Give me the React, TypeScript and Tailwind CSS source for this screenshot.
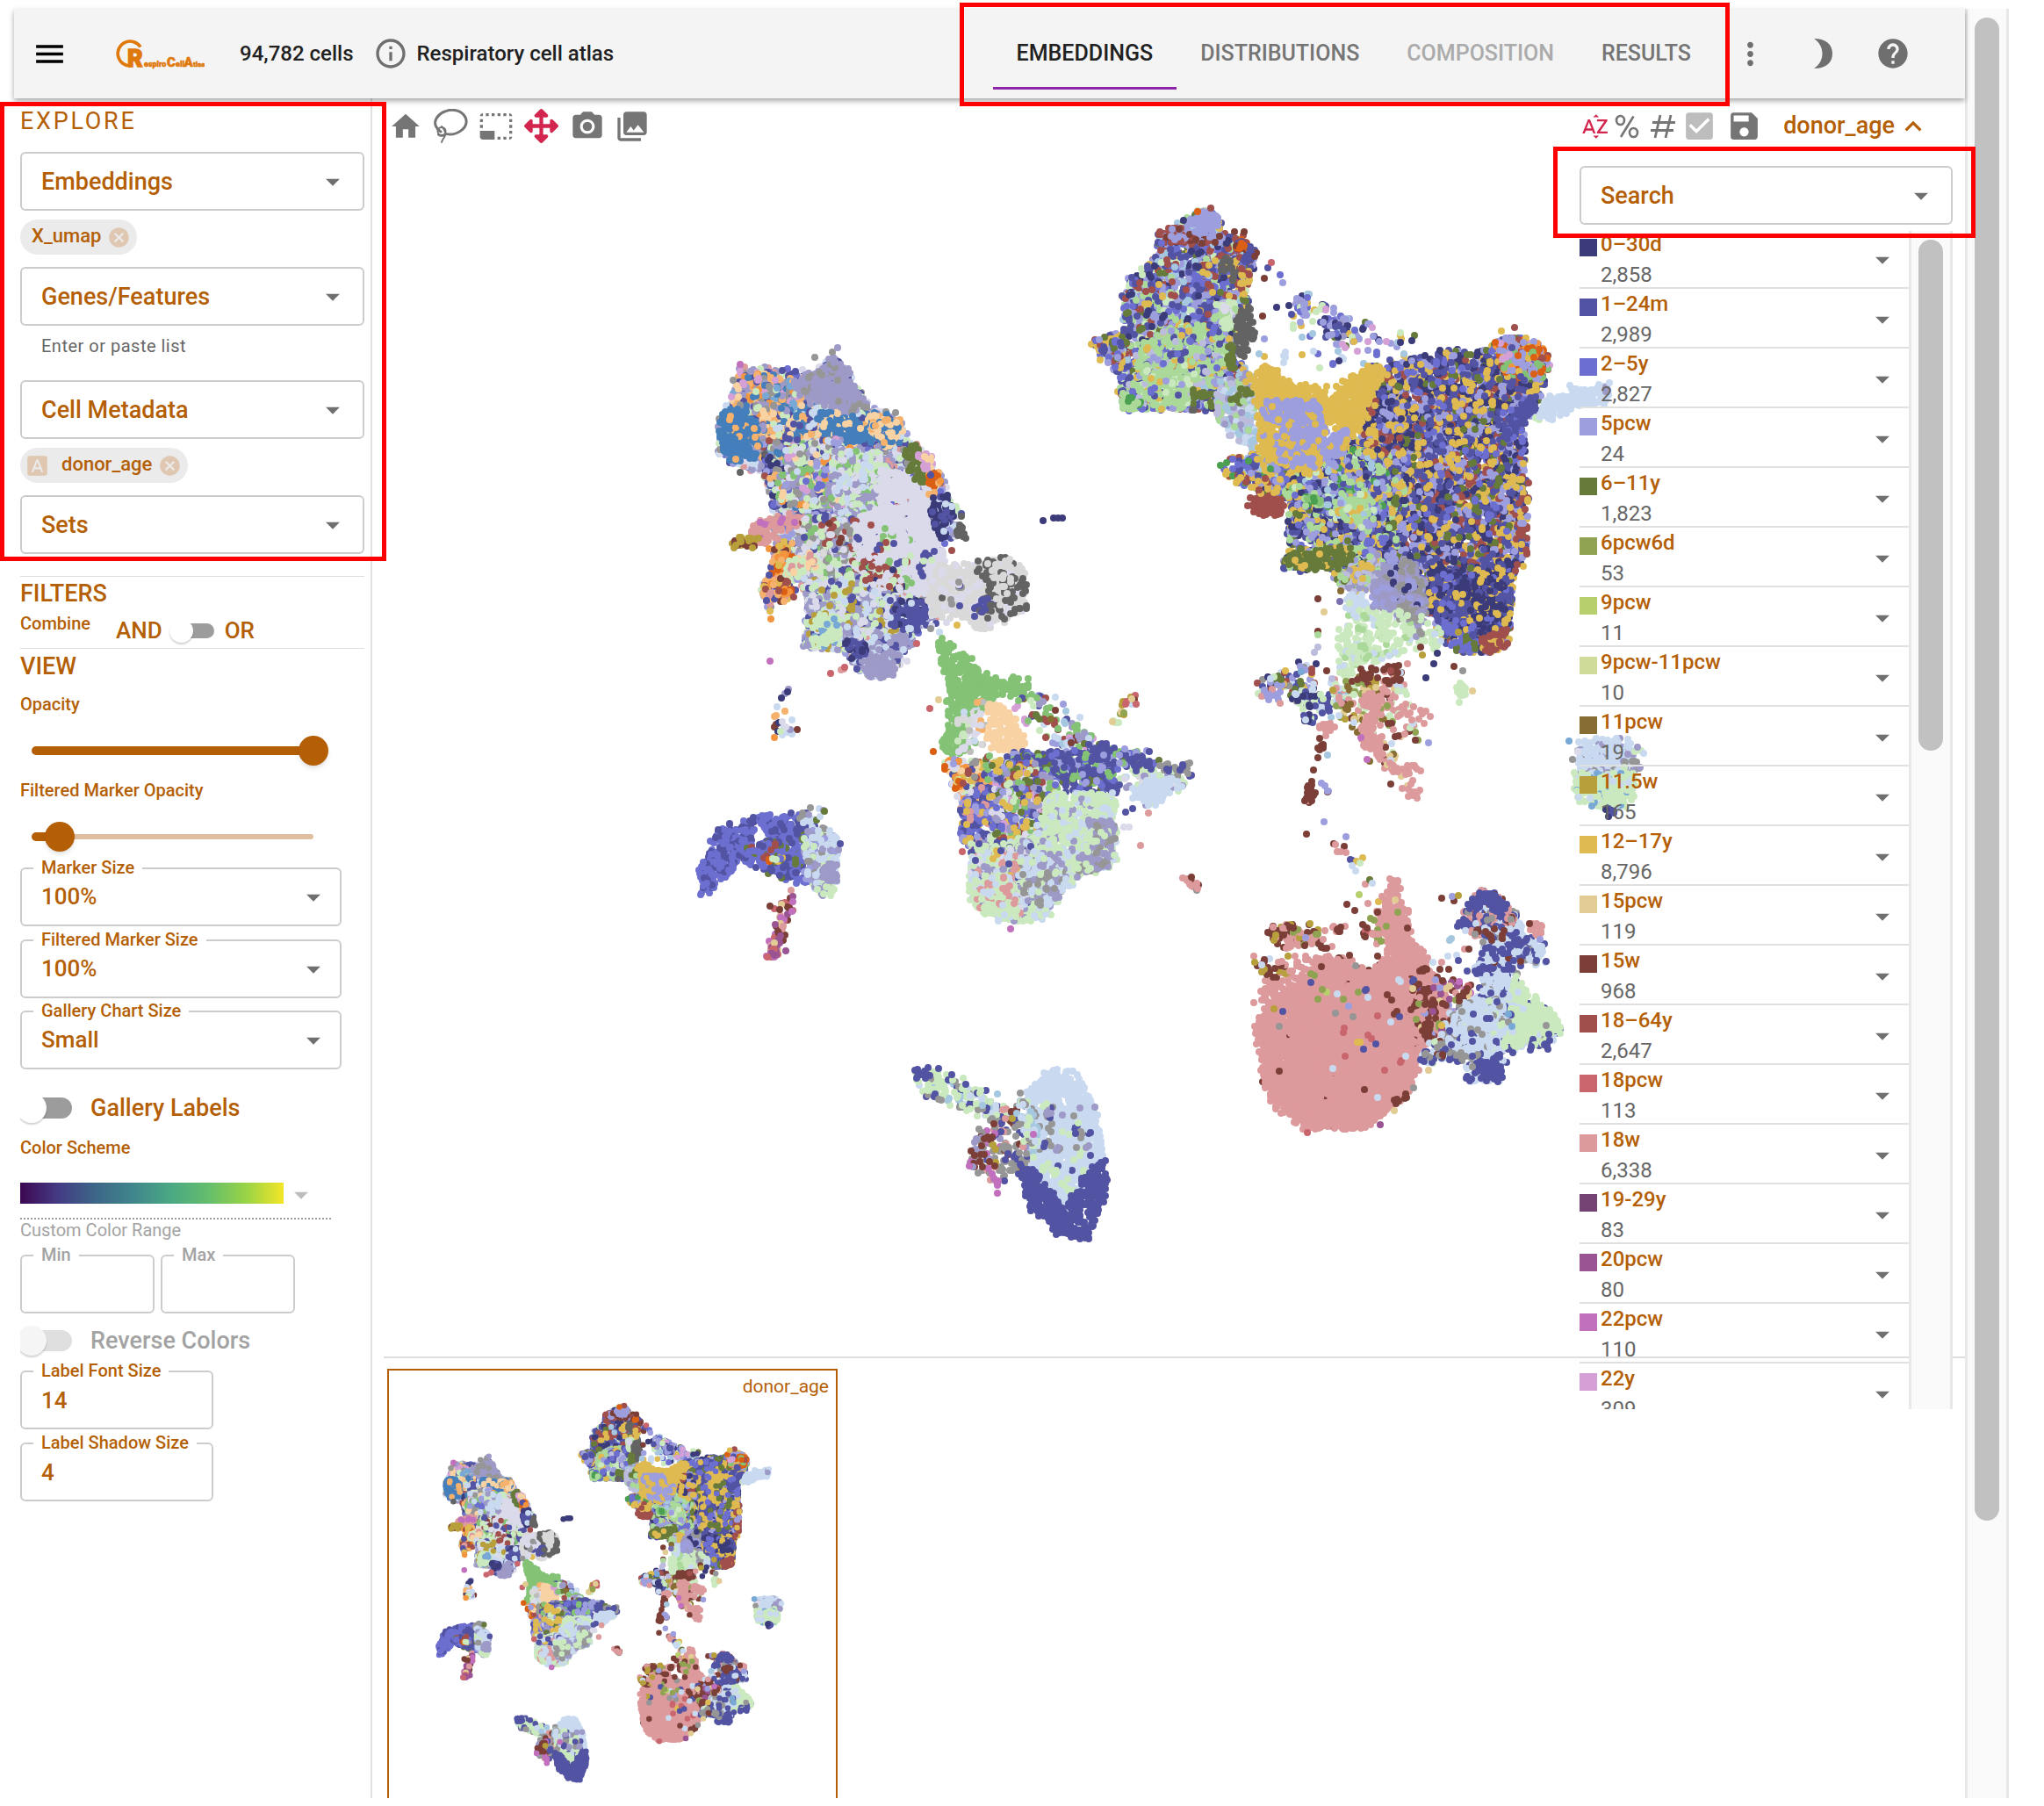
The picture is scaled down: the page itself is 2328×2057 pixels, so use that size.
import React, { useId } from "react";
import {
  MdArrowDropDown,
  MdCancel,
  MdCheckBox,
  MdExpandLess,
  MdFontDownload,
  MdHelp,
  MdHome,
  MdInfoOutline,
  MdMenu,
  MdMoreVert,
  MdPhotoCamera,
  MdPhotoLibrary,
  MdPhotoSizeSelectSmall,
  MdSave,
  MdSortByAlpha,
} from "react-icons/md";
import { FaArrowsAlt } from "react-icons/fa";

/* ---------- embedding data ---------- */

const PALETTE: Record<string, string> = {
  a: "#3B3B79", b: "#5353A3", c: "#6C6FCF", d: "#9D9EDE", e: "#667A3A", f: "#8FA353",
  g: "#B7CF6D", h: "#CFDB99", i: "#876D33", j: "#B79F3B", k: "#DEBA50", l: "#E2CC94",
  m: "#7B3F38", n: "#A04F4C", o: "#C9666D", p: "#DD9A9C", q: "#744373", r: "#9A5494",
  s: "#C170BD", t: "#D4A0D6", A: "#457FBB", B: "#78A9D6", C: "#A5C7E0", D: "#C9DAF0",
  E: "#DB6014", F: "#F3943F", G: "#F6B26D", H: "#F8D2A2", I: "#4A9F51", J: "#84C276",
  K: "#AAD99A", L: "#CBE9BF", M: "#7A70B0", N: "#9E9AC8", O: "#BCBDDC", P: "#DADAEB",
  Q: "#636363", R: "#969696", S: "#BDBDBD", T: "#D9D9D9",
};

type Frame = { ox: number; oy: number; sx: number; sy: number };
/* [colour mix, outline, area per cell] */
type Region = [string, string, number?];

const DENSE = 13;

const WEST: Frame = { ox: 780, oy: 370, sx: 2.529, sy: 2.119 };
const NORTH: Frame = { ox: 1220, oy: 210, sx: 2.613, sy: 2.24 };
const EAST: Frame = { ox: 1340, oy: 900, sx: 3, sy: 2.904 };
const SOUTH: Frame = { ox: 600, oy: 43, sx: 1.022, sy: 1.0805 };

const WEST_REGIONS: Region[] = [
  ["NNNLDPPRbdcLp", "160,110 230,105 300,110 380,115 430,70 450,95 490,140 530,200 600,215 640,270 690,300 730,360 760,410 780,450 800,500 770,515 740,500 735,560 735,700 660,745 640,790 600,840 540,850 500,830 450,780 400,775 340,785 360,730 340,640 320,620 280,640 240,690 220,640 260,580 260,520 250,400 225,360 160,335 95,310 95,270 130,190"],
  ["GGHABNNLbRtFG", "135,190 160,110 240,110 330,140 380,200 330,270 210,290 180,220"],
  ["NbRGdcLnQBAaD", "220,290 340,280 400,400 380,440 300,440 260,430 230,370"],
  ["AAAHHGNLDAb", "220,220 400,190 560,215 625,250 600,300 450,280 300,285 220,260"],
  ["AAAAAAAAAAG", "95,270 115,215 150,195 195,240 225,270 190,330 140,330 100,300"],
  ["NNNNNNNNNNNR", "310,140 380,115 430,75 450,105 490,150 525,195 480,215 400,200 360,190"],
  ["AAAAH", "380,210 470,215 540,280 500,290 400,270"],
  ["HHHGA", "520,215 590,215 630,250 600,270 550,250"],
  ["NNbLRJFJDPdcHtNL", "300,290 440,270 500,330 480,430 380,440 300,430 260,420 280,360"],
  ["LLLNDPJPN", "420,300 560,310 600,350 560,480 460,460 430,390"],
  ["PPPPNDJRnbLRTNL", "310,460 520,470 560,560 560,620 400,620 340,600 330,540"],
  ["nnmRNbLP", "370,450 410,460 430,510 480,540 460,560 400,520", 26],
  ["PPPPPPPPPPPPP", "560,350 640,355 700,400 715,470 735,540 750,610 690,660 620,630 560,600 500,540 490,490 560,420"],
  ["PJnbL", "470,480 720,500 700,640 520,620", 110],
  ["eeeee", "640,285 665,290 690,340 725,375 695,390 660,360 635,320"],
  ["ttttH", "660,305 700,305 718,335 700,350 675,330"],
  ["EFbGE", "700,360 730,350 740,395 710,415"],
  ["aaaabDa", "705,450 740,405 770,430 775,470 745,520 720,480"],
  ["QQQQ", "772,450 792,455 800,500 825,528 795,515", 20],
  ["ppppppps", "190,500 210,475 270,465 330,455 320,480 265,500 250,530 220,535"],
  ["jjmjm", "135,520 170,510 215,515 210,530 150,545"],
  ["EEFFGpnkbGm", "260,520 300,520 320,560 285,600 320,650 265,670 235,665 222,640 245,590"],
  ["LLHLp", "310,560 380,550 400,590 330,610 290,600"],
  ["LLLNNDPjDbLPN", "340,620 560,600 620,650 640,740 560,770 450,785 355,775 360,700"],
  ["nnnaPPL", "490,560 570,570 640,640 600,660 500,590", 24],
  ["NNNNDDb", "470,770 640,745 620,800 590,840 540,850 500,830"],
  ["NNNNNNN", "520,810 620,790 600,840 545,855"],
  ["LLLLLB", "375,750 380,700 450,700 450,765 360,780"],
  ["bbbbbbabD", "590,665 690,665 700,720 650,740 590,725"],
  ["bba", "460,760 530,770 530,805 480,800"],
  ["TTTTTTP", "730,580 830,580 880,565 965,565 982,620 980,680 920,710 870,740 830,730 800,700 730,700 700,650"],
  ["QQQQ", "840,570 960,560 985,620 985,690 920,710 850,700 840,640", 60],
  ["TTT", "870,570 950,565 930,680 880,650", 60],
  ["bbbbQ", "840,660 890,650 890,685 830,705", 24],
  ["QRabPP", "730,610 810,610 800,680 740,690", 90],
  ["NkRDPb", "690,725 800,710 830,715 700,750", 60],
  ["aaFNa", "280,880 300,872 300,890 278,905", 30],
  ["mDDLNaPGDD", "252,930 305,920 310,960 335,995 290,995 255,970", 45],
  ["oopLl", "450,825 500,825 500,840 455,840", 60],
  ["JJJJJJJJJ", "722,770 745,755 800,795 850,840 900,858 990,860 1005,885 940,890 880,905 830,935 800,990 775,1040 738,1025 762,970 767,890 745,830"],
  ["JJJJ", "1010,930 1060,940 1075,970 1035,955", 20],
  ["PDJGLSTPG", "785,910 860,905 865,1035 790,1045", 34],
  ["HHHHHHH", "875,920 905,912 940,940 965,985 985,1005 950,1030 900,1030 868,990"],
  ["bLJdtDeiNnCLmJ", "950,890 1060,885 1130,950 1200,1000 1190,1030 1060,1030 1020,1000 940,950", 85],
  ["NLDJRdtm", "1070,960 1140,965 1190,1000 1190,1025 1090,1020", 40],
  ["LLDNTDPL", "1250,1090 1330,1070 1465,1105 1400,1130 1360,1165 1320,1180 1270,1130", 45],
  ["bbbbbbbcJde", "950,1035 1100,1030 1200,1010 1340,1040 1380,1060 1330,1070 1240,1065 1240,1125 1160,1135 1080,1110 1000,1090 930,1070"],
  ["RRRRRb", "1340,1060 1400,1055 1465,1070 1465,1095 1400,1085"],
  ["DDDDDD", "1290,1120 1370,1095 1430,1110 1350,1150 1300,1145"],
  ["GFnbPLkcRHdEFL", "745,1045 850,1050 900,1060 900,1150 830,1180 790,1150 765,1090"],
  ["ccccbbpkd", "790,1160 870,1110 900,1180 880,1240 850,1265 790,1245"],
  ["cckbLdnPetNbkJP", "860,1040 1000,1050 1080,1110 1060,1250 880,1250 880,1120"],
  ["LLLLLLDNDL", "1060,1130 1240,1130 1245,1250 1235,1305 1150,1320 1080,1380 1030,1430 930,1440 830,1400 815,1330 850,1270 1000,1240"],
  ["NNRLNRL", "1160,1195 1240,1195 1240,1290 1180,1320 1130,1320 1160,1250"],
  ["LNpbkNDLLPL", "820,1260 1000,1240 1000,1350 950,1435 840,1395"],
  ["LLLDp", "820,1330 940,1330 960,1430 850,1400"],
  ["DDNNDRNLL", "980,1270 1100,1290 1090,1360 1040,1410 980,1390 960,1320"],
  ["fJjomLlDb", "1215,950 1250,930 1285,870 1310,885 1305,935 1285,920 1260,950 1230,970", 38],
  ["pppm", "1440,1335 1460,1335 1482,1358 1465,1362", 20],
  ["ccccbbc", "40,1325 65,1260 100,1215 200,1195 210,1225 160,1270 130,1325 80,1360 45,1375"],
  ["ccccbbbec", "190,1195 270,1178 340,1180 375,1220 360,1260 365,1345 310,1350 240,1325 180,1300 150,1270 240,1240 230,1210"],
  ["eEFnLnbkcc", "160,1260 280,1250 300,1300 200,1305", 55],
  ["eNDRbe", "330,1180 400,1155 405,1190 340,1205", 30],
  ["DDDNNNLLRdD", "340,1220 420,1210 445,1260 440,1335 420,1370 370,1365 345,1320"],
  ["LLLLN", "370,1355 430,1350 420,1380 385,1375"],
  ["NNNN", "390,1310 438,1300 438,1345 400,1340"],
  ["pprrsommols", "275,1365 315,1370 315,1400 290,1450 275,1520 250,1530 230,1515 260,1450", 22],
  ["rrso", "225,1510 275,1510 275,1525 250,1535", 16],
];

const NORTH_REGIONS: Region[] = [
  ["bbccadknneLKCddb", "345,90 400,65 435,90 450,130 545,170 545,210 520,260 525,320 500,340 480,420 515,480 480,540 460,570 350,575 155,578 145,540 175,510 130,485 120,450 60,410 130,385 160,370 160,310 155,275 175,245 230,200 270,165 260,130 300,125"],
  ["KKKKLKOKdkKbc", "200,410 300,370 420,350 480,400 460,460 440,510 350,520 340,575 220,575 155,575 145,530 200,500"],
  ["LLKOP", "440,300 490,300 490,370 440,370"],
  ["nnnmdd", "250,130 310,105 380,130 460,135 440,150 320,150"],
  ["ddddddd", "355,80 400,65 435,80 438,120 380,125 350,105"],
  ["mmbnEb", "480,120 550,165 555,190 520,205 490,160"],
  ["QQQQk", "450,180 490,200 495,250 470,250 440,210", 20],
  ["QQQQQ", "500,325 525,310 550,370 545,400 520,410 530,440 495,440 490,370"],
  ["kkkn", "500,220 540,200 525,290 500,280", 22],
  ["knbdcek", "55,408 130,385 160,400 160,485 120,465"],
  ["eeeeee", "350,530 450,525 440,540 360,545"],
  ["eeee", "465,400 485,410 485,470 465,470"],
  ["IIKJ", "160,520 200,520 210,570 170,570", 40],
  ["QQQn", "345,572 405,572 400,585 350,585"],
  ["OOCNODKC", "445,490 540,475 555,560 555,675 500,650 455,625 430,585"],
  ["eJeK", "450,560 520,520 560,520 520,560", 30],
  ["abcdktLedCa", "640,290 720,270 830,330 900,360 1030,380 1060,420 960,450 830,420 720,400 640,380", 85],
  ["bbcdNa", "740,340 820,330 840,390 760,395", 28],
  ["dcbNLk", "650,290 720,280 730,340 650,345", 38],
  ["akDLcdtC", "620,430 860,420 900,450 830,470 640,480", 150],
  ["bbbaakkddcnnebdak", "880,470 950,460 1060,440 1120,420 1180,430 1250,420 1290,390 1350,400 1420,430 1410,480 1380,580 1340,600 1355,680 1355,760 1345,850 1355,930 1315,1010 1305,1100 1295,1180 1240,1195 1170,1195 1110,1160 1080,1100 1000,1000 920,920 880,900 850,700 880,600"],
  ["kdbKbceadaKk", "540,680 900,640 1000,760 960,1000 870,1035 790,1010 760,980 700,985 630,970 650,940 645,880 660,840 640,800 560,775 530,720"],
  ["kkdnbCccIk", "435,720 500,695 600,700 640,760 560,775 470,745"],
  ["nnnnnnnn", "522,820 570,785 635,800 635,840 540,845"],
  ["kkn", "540,775 600,770 620,790 560,790", 20],
  ["KJIcLkdCabkdb", "650,770 820,690 920,650 940,740 900,880 830,870 700,820"],
  ["KKLKdkC", "780,820 880,780 900,890 840,880", 18],
  ["JJJIK", "680,800 750,775 750,800 700,820", 18],
  ["kkkkkkkkk", "505,485 590,460 630,505 730,520 780,525 830,495 880,468 935,462 900,540 890,600 840,640 750,600 740,690 710,745 650,715 560,685 555,560 545,520"],
  ["ddddddk", "570,555 750,550 750,620 840,630 810,680 720,715 630,685 640,620 590,600"],
  ["kddk", "550,620 640,640 760,640 850,660 700,740 600,690", 50],
  ["kkkdaabn", "880,560 1000,540 980,700 860,720", 30],
  ["eeeeek", "630,968 660,935 820,925 845,960 760,978 700,985"],
  ["kOKNkeNO", "790,1000 900,940 940,1000 900,1045 810,1030"],
  ["NNRRdNa", "900,1000 1000,940 1050,1000 1060,1100 1000,1090 920,1075"],
  ["aaabbbckab", "1060,960 1200,1000 1310,960 1305,1120 1200,1160 1080,1090"],
  ["aaabk", "1200,1000 1300,1010 1290,1110 1200,1100", 24],
  ["ccccbje", "1090,1110 1200,1150 1210,1195 1150,1195"],
  ["nnnnnk", "1220,1160 1300,1125 1295,1175 1230,1198"],
  ["nnkbdn", "1335,800 1362,800 1362,930 1320,1000", 24],
  ["dddntJEFkdbd", "1255,410 1350,385 1430,435 1400,500 1310,500"],
  ["EEnE", "1365,425 1425,425 1410,450 1380,445", 36],
  ["bbbbbbc", "1280,600 1385,540 1385,580 1330,620 1330,655 1280,645"],
  ["LDL", "1360,590 1400,600 1380,615", 40],
  ["DDDDDDD", "1395,565 1480,520 1600,508 1605,530 1590,555 1500,565 1450,605 1405,590"],
  ["NNRND", "1545,505 1605,510 1600,545 1540,535", 50],
  ["LLLLDLLK", "820,1060 870,1060 900,1090 1000,1080 1105,1150 1095,1180 1020,1180 980,1200 930,1225 870,1200 850,1260 795,1265 795,1150 830,1120", 26],
  ["DDDDL", "815,1045 875,1055 850,1105 815,1090"],
  ["NRLNRL", "900,1050 1060,1095 1050,1160 990,1120", 20],
  ["NNNNd", "890,1010 950,1020 960,1080 910,1080"],
  ["adndkDRbeBLn", "550,1275 640,1240 720,1210 740,1270 700,1320 550,1300", 30],
  ["ddddp", "560,1285 620,1290 655,1315 575,1305"],
  ["abbLDCaaLb", "640,1295 755,1300 780,1350 700,1385 680,1380 700,1340", 22],
  ["BCLD", "760,1290 830,1280 830,1320 780,1330", 26],
  ["ppppmLjDflim", "780,1270 980,1240 1000,1340 1050,1420 980,1420 960,1500 900,1470 860,1400 770,1340", 36],
  ["ppppp", "870,1290 920,1300 915,1400 935,1475 890,1445 865,1400", 18],
  ["mmmm", "880,1235 980,1225 970,1275 830,1260", 40],
  ["pppp", "980,1340 1045,1325 1065,1365 985,1380", 40],
  ["pppp", "720,1390 770,1370 800,1390 740,1410", 24],
  ["ppppl", "920,1480 1020,1475 1055,1530 1010,1560 980,1530", 40],
  ["mmmm", "732,1400 752,1430 758,1450 742,1450", 18],
  ["mmmp", "703,1530 722,1520 728,1570 695,1580", 15],
  ["LLLLL", "1145,1270 1175,1280 1178,1320 1158,1322"],
];

const EAST_REGIONS: Region[] = [
  ["pppppppppppppppppm", "260,775 400,760 460,600 480,560 560,555 650,600 720,560 780,545 850,545 870,600 920,650 945,720 930,800 860,820 825,900 825,930 785,1005 735,1045 675,1095 600,1122 450,1122 405,1090 335,1035 295,960 295,850 270,810"],
  ["ppppppppppppppppppp", "262,778 380,640 460,600 560,560 650,605 780,560 780,700 815,900 785,1000 735,1040 675,1090 600,1122 450,1122 405,1090 335,1035 295,960 295,850 270,810"],
  ["pppppp", "275,660 330,630 500,640 500,760 400,760 300,700 275,690", 22],
  ["pppppppp", "735,280 755,280 760,370 795,400 800,490 850,520 850,560 720,560 730,500 685,460 690,385 715,370"],
  ["mmmpDbfRlpD", "430,590 860,580 840,880 730,820 480,700", 620],
  ["mbDok", "380,720 820,740 800,960 660,960", 1400],
  ["mmmmjpp", "305,460 400,440 490,450 480,490 410,535 340,510", 22],
  ["ppmf", "310,450 500,455 520,500 400,520", 60],
  ["mmmpj", "320,575 405,590 400,620 300,620", 24],
  ["ppjDm", "255,550 330,540 340,600 280,600", 80],
  ["pp", "290,545 460,540 460,600 390,600", 60],
  ["ppm", "480,440 600,450 600,530 500,560", 160],
  ["mmmm", "545,440 590,460 570,485 548,470", 20],
  ["mmmo", "625,435 650,440 660,500 632,475", 18],
  ["ppf", "650,400 720,440 700,520 640,460", 60],
  ["mmmmplfdrmp", "780,650 860,615 1000,640 1010,720 950,740 900,830 850,825 800,700", 36],
  ["mmmm", "845,760 875,760 870,830 848,825", 16],
  ["mmmj", "690,1080 790,990 800,930 815,940 800,1000 740,1045", 46],
  ["DDDbbDRD", "960,720 1040,680 1060,610 1020,600 1040,560 1050,470 1100,400 1150,400 1190,460 1255,525 1260,570 1160,565 1160,640 1230,720 1300,745 1315,790 1280,830 1190,845 1120,870 1110,940 1080,965 1000,955 980,900 900,885 835,905 835,870 900,820 930,760", 12],
  ["LLLLLLLLD", "1155,605 1180,650 1240,712 1300,745 1315,790 1250,825 1180,850 1105,850 1095,800 1140,740 1145,680"],
  ["DDDDDDDRL", "970,725 1060,690 1140,710 1130,770 1070,865 980,840"],
  ["ppbbDDRpmb", "975,470 990,390 1030,330 1080,330 1155,400 1155,450 1100,440 1030,490"],
  ["bbbbb", "1000,360 1040,330 1080,350 1130,380 1110,400 1060,380 1000,400"],
  ["bbb", "940,440 1000,420 1000,450 960,455", 24],
  ["pppp", "1205,440 1250,445 1250,485 1205,475"],
  ["bDbDbm", "1050,450 1180,450 1190,580 1060,600", 40],
  ["bbbb", "985,610 1060,585 1100,560 1060,610", 20],
  ["bbbbL", "1195,845 1300,805 1270,845 1250,872", 24],
  ["bbbbbb", "1030,890 1095,875 1120,930 1080,970 1020,945"],
  ["bbb", "985,950 1020,945 1010,962 990,960", 14],
  ["RRRRb", "930,875 1030,860 1030,925 960,895", 22],
  ["bbbDLRm", "830,860 960,780 960,880 840,910", 50],
  ["bb", "1000,800 1150,810 1160,870 1050,860", 110],
  ["bbR", "990,680 1150,690 1150,800 990,800", 320],
  ["srmlor", "960,630 1010,640 1005,710 960,680", 26],
  ["ppmi", "525,175 550,175 590,210 562,212", 22],
  ["mmmp", "430,0 470,0 480,40 430,42", 16],
  ["pp", "785,0 830,0 800,30", 20],
];

const SOUTH_REGIONS: Region[] = [
  ["bLLLbDRLC", "450,1275 470,1267 550,1300 560,1338 530,1330 462,1300", 26],
  ["bbb", "448,1275 468,1266 470,1285 452,1288", 24],
  ["RRRRmjpRNbs", "525,1345 560,1312 590,1320 590,1380 555,1415 514,1388", 34],
  ["mmm", "515,1365 545,1350 540,1388 518,1385", 60],
  ["DDDDDDDD", "580,1300 600,1276 620,1269 640,1277 662,1315 672,1380 655,1400 640,1440 610,1440 590,1400 590,1340"],
  ["RDLCD", "570,1290 600,1330 590,1400 570,1340", 40],
  ["bRLDN", "600,1310 665,1320 665,1380 600,1400", 90],
  ["LDL", "600,1390 650,1390 630,1435", 60],
  ["bbbbbbbb", "572,1385 600,1400 625,1445 650,1400 674,1378 676,1410 656,1474 630,1480 582,1435"],
  ["DDDDDDDDNR", "1226,866 1250,862 1284,866 1290,890 1284,908 1228,908 1222,890"],
  ["PPR", "1210,874 1226,880 1226,890 1212,884", 70],
  ["NRNLN", "1275,866 1298,872 1292,912 1280,910", 70],
  ["LLLLLLLLDB", "1222,906 1288,904 1290,922 1282,940 1262,950 1238,944 1216,930"],
  ["aab", "1250,945 1268,952 1262,960", 18],
];

const WEST_CELLS =
  "a1033,473 a1062,467 a1075,466 a1088,466 F258,995 o420,842 s245,812 k245,690 F248,710 o706,925 l732,905 E715,1030 p1312,1257 o800,1272 s937,1457 R375,78 R425,65 N440,55 s160,95 b448,1253 b1270,1175 b1290,1168 p1335,1178 P1265,1213 P1280,1213 R138,133 n770,545 Q160,355 Q845,570 m245,1402 m273,1412 o668,770";
const NORTH_CELLS =
  "m733,1058 l752,1090 m735,1140 K733,1150 O725,1195 O735,1180 m575,240 b585,212 o595,200 c623,230 d630,250 a612,313 m570,335 d575,395 n1320,365 k1280,375 m1138,1230 R1165,1240 a1055,1258 a1090,1197 a1080,1223 d755,1535 d765,1548 d745,1528 m735,1463 m720,1493 C763,1457 p1070,1357 l1195,1293 m515,120 n265,120 m760,1240 O775,1262 n950,1242 k575,440 C560,432 m1040,1180 j1045,1200 p1002,1222 i802,1038 M800,1065 s880,1468 s862,1412 d1063,1425 m950,1530 n415,60 E376,70 p622,1323";
const EAST_CELLS =
  "m443,145 d503,105 d580,155 b594,228 b600,232 k635,225 k615,235 L627,242 D600,250 D613,268 p645,312 e660,297 D670,307 g625,345 p653,375 k690,368 p702,350 l748,362 m583,378 m610,397 m687,405 f675,430 f755,405 f698,500 m790,455 m590,545 m687,548 m905,357 m948,365 d942,350 j963,348 C940,490 C932,497 p985,525 m1000,525 D927,549 D957,545 D877,570 b962,563 m900,593 m930,593 p905,570 o448,1133 r696,1105 p265,550 j268,570 D290,577 j290,600 p263,703 R811,985 l745,1060 R350,782 b362,733 b460,637 j332,723 p300,722 R543,738 R603,750 d588,715 f483,692 f570,692 f620,667 g512,668 f497,658 D655,684 b682,840 o577,880 D534,921 D687,1016 D733,768 b640,858 m350,930 m1207,440 d1242,495 p22,290 p35,300 m52,288 p45,310 p60,320 R70,330 p72,325 j455,440 j340,480 j382,550 d440,487 R1262,777 D783,880 R850,875 m643,990 k905,778 l860,925 m517,7 d516,2 B1145,782 B1133,740";
const SOUTH_CELLS = "s515,1388 s548,1412 s548,1422 s590,1350 j543,1362 C548,1300 b455,1270 B1213,866 D1300,881 N1296,898";

function createRandom(seed: number) {
  let state = seed;
  return () => {
    state = (state + 0x6d2b79f5) | 0;
    let t = Math.imul(state ^ (state >>> 15), 1 | state);
    t = (t + Math.imul(t ^ (t >>> 7), 61 | t)) ^ t;
    return ((t ^ (t >>> 14)) >>> 0) / 4294967296;
  };
}

type Point = [number, number];

function inside([x, y]: Point, outline: Point[]) {
  let hit = false;
  for (let i = 0, j = outline.length - 1; i < outline.length; j = i++) {
    const [xi, yi] = outline[i];
    const [xj, yj] = outline[j];
    if (yi > y !== yj > y && x < ((xj - xi) * (y - yi)) / (yj - yi) + xi) hit = !hit;
  }
  return hit;
}

type Layer = { color: string; d: string };

function buildLayers(): Layer[] {
  const random = createRandom(94782);
  const layers: Layer[] = [];

  const place = (frame: Frame, x: number, y: number): Point => [frame.ox + x / frame.sx, frame.oy + y / frame.sy];

  const addRegion = (frame: Frame, [mix, text, area = DENSE]: Region) => {
    const outline = text.split(" ").map((pair) => {
      const [x, y] = pair.split(",").map(Number);
      return place(frame, x, y);
    });
    const xs = outline.map((p) => p[0]);
    const ys = outline.map((p) => p[1]);
    const left = Math.min(...xs);
    const top = Math.min(...ys);
    const width = Math.max(...xs) - left;
    const height = Math.max(...ys) - top;
    const tries = Math.ceil((width * height) / area);
    const passes = 4;
    for (let pass = 0; pass < passes; pass++) {
      const marks = new Map<string, string>();
      for (let i = 0; i < tries / passes; i++) {
        const point: Point = [left + random() * width, top + random() * height];
        const key = mix[Math.floor(random() * mix.length)];
        const twin = random() < 0.3;
        const shift: Point = [random() * 10 - 5, random() * 10 - 5];
        /* soften the outline so neighbouring groups blend into each other */
        const probe: Point = [point[0] + random() * 10 - 5, point[1] + random() * 10 - 5];
        if (!inside(probe, outline)) continue;
        let mark = `M${Math.round(point[0])} ${Math.round(point[1])}h0`;
        const next: Point = [point[0] + shift[0], point[1] + shift[1]];
        if (twin && inside(next, outline)) mark += `M${Math.round(next[0])} ${Math.round(next[1])}h0`;
        marks.set(key, (marks.get(key) ?? "") + mark);
      }
      marks.forEach((d, key) => layers.push({ color: PALETTE[key], d }));
    }
  };

  const addCells = (frame: Frame, text: string) => {
    text.split(" ").forEach((cell) => {
      const [x, y] = cell.slice(1).split(",").map(Number);
      const [px, py] = place(frame, x, y);
      layers.push({ color: PALETTE[cell[0]], d: `M${Math.round(px)} ${Math.round(py)}h0` });
    });
  };

  NORTH_REGIONS.forEach((region) => addRegion(NORTH, region));
  addCells(NORTH, NORTH_CELLS);
  WEST_REGIONS.forEach((region) => addRegion(WEST, region));
  addCells(WEST, WEST_CELLS);
  EAST_REGIONS.forEach((region) => addRegion(EAST, region));
  addCells(EAST, EAST_CELLS);
  SOUTH_REGIONS.forEach((region) => addRegion(SOUTH, region));
  addCells(SOUTH, SOUTH_CELLS);
  return layers;
}

const LAYERS = buildLayers();

function Cells({ size }: { size: number }) {
  return (
    <g fill="none" strokeLinecap="round" strokeWidth={size}>
      {LAYERS.map((layer, i) => (
        <path key={i} d={layer.d} stroke={layer.color} />
      ))}
    </g>
  );
}

/* ---------- small parts ---------- */

function Callout({ className }: { className: string }) {
  return <div aria-hidden="true" className={`pointer-events-none absolute z-20 border-[5px] border-[#ff0000] ${className}`} />;
}

function Combo({ label, className = "" }: { label: string; className?: string }) {
  return (
    <div className={`relative h-[67px] ${className}`}>
      <select
        aria-label={label}
        className="h-full w-full appearance-none rounded-md border-2 border-[#cccccc] bg-transparent pt-[2px] pl-[22px] text-[27px] font-medium text-[#b45f06]"
      >
        <option>{label}</option>
      </select>
      <MdArrowDropDown className="pointer-events-none absolute top-[15px] right-[17px] size-[38px] text-[#6f6f6f]" />
    </div>
  );
}

function Outlined({ label, className = "", children, muted = false }: {
  label: string;
  className?: string;
  muted?: boolean;
  children: (id: string) => React.ReactNode;
}) {
  const id = useId();
  return (
    <div className={`relative h-[67px] ${className}`}>
      <label
        htmlFor={id}
        className={`absolute -top-3 left-[15px] bg-white px-[9px] text-[20px] leading-6 whitespace-nowrap ${muted ? "text-[#a3a3a3]" : "font-medium text-[#b45f06]"}`}
      >
        {label}
      </label>
      {children(id)}
    </div>
  );
}

const FIELD = "h-full w-full appearance-none rounded-md border-2 border-[#cccccc] bg-transparent pl-[22px] text-[26px] font-medium text-[#b45f06]";

function OutlinedSelect({ label, value, className }: { label: string; value: string; className: string }) {
  return (
    <Outlined label={label} className={className}>
      {(id) => (
        <>
          <select id={id} className={FIELD}>
            <option>{value}</option>
          </select>
          <MdArrowDropDown className="pointer-events-none absolute top-[15px] right-[13px] size-[38px] text-[#6f6f6f]" />
        </>
      )}
    </Outlined>
  );
}

function OutlinedInput({ label, value, className, muted }: { label: string; value?: string; className: string; muted?: boolean }) {
  return (
    <Outlined label={label} className={className} muted={muted}>
      {(id) => <input id={id} type="text" defaultValue={value} disabled={muted} className={FIELD} />}
    </Outlined>
  );
}

function Chip({ label, icon }: { label: string; icon?: React.ReactNode }) {
  return (
    <div className="mt-[10px] flex h-10 w-fit items-center rounded-full bg-[#ebebeb] pr-[7px] pl-[13px] text-[22px] leading-6 font-medium text-[#b45f06]">
      {icon}
      <span className="pb-[2px]">{label}</span>
      <button type="button" aria-label={`Remove ${label}`} className="ml-[7px]">
        <MdCancel className="size-[27px] text-[#dfc7b1]" />
      </button>
    </div>
  );
}

function Slider({ label, value, className }: { label: string; value: number; className: string }) {
  const id = useId();
  return (
    <>
      <label htmlFor={id} className={`block text-[20px] leading-6 font-medium ${className}`}>
        {label}
      </label>
      <div className="relative mt-6 mr-12 -ml-1 flex h-[34px] items-center">
        <div className="absolute inset-x-[17px] flex items-center">
          <div className="h-[10px] rounded-full bg-[#b45f06]" style={{ width: `${value}%` }} />
          <div className="-ml-1 h-[6px] flex-1 rounded-r-full bg-[#e0bfa0]" />
        </div>
        <input
          id={id}
          type="range"
          min={0}
          max={100}
          defaultValue={value}
          className="relative m-0 w-full appearance-none bg-transparent [&::-webkit-slider-thumb]:size-[34px] [&::-webkit-slider-thumb]:appearance-none [&::-webkit-slider-thumb]:rounded-full [&::-webkit-slider-thumb]:bg-[#b45f06] [&::-webkit-slider-thumb]:shadow-md"
        />
      </div>
    </>
  );
}

function LabelledSwitch({ label, className, disabled = false }: { label: string; className: string; disabled?: boolean }) {
  return (
    <label className={`flex h-10 items-center gap-[21px] text-[27px] ${disabled ? "text-[#a3a3a3]" : "font-medium"} ${className}`}>
      <input type="checkbox" disabled={disabled} className="sr-only" />
      <span className="flex h-10 w-[59px] items-center overflow-hidden">
        <span className={`relative z-[1] -ml-1 size-[34px] shrink-0 rounded-full shadow-[0_2px_2px_rgba(0,0,0,0.18)] ${disabled ? "bg-[#f5f5f5]" : "bg-white"}`} />
        <span className={`-ml-2 h-6 flex-1 rounded-r-full ${disabled ? "bg-[#dfdfdf]" : "bg-[#9c9c9c]"}`} />
      </span>
      {label}
    </label>
  );
}

function ScrollBar({ className, thumb }: { className: string; thumb: string }) {
  return (
    <div aria-hidden="true" className={`border-x-[3px] border-[#e8e8e8] bg-[#fafafa] ${className}`}>
      <div className={`mx-auto rounded-full bg-[#c1c1c1] ${thumb}`} />
    </div>
  );
}

function Logo() {
  return (
    <svg viewBox="0 0 108 40" className="ml-12 h-10 w-[108px] shrink-0" role="img" aria-label="RespiroCellAtlas">
      <path d="M35 12.500A14 14 0 1 0 24 34" fill="none" stroke="#e0790b" strokeWidth="3.600" />
      <g fill="#e0790b" stroke="#e0790b" fontFamily="Roboto, sans-serif" fontWeight="900">
        <text x="20" y="35" fontSize="27" strokeWidth="1.400">R</text>
        <text x="39" y="35" fontSize="9" strokeWidth="0.500">espiro</text>
        <text x="65" y="35" fontSize="15" strokeWidth="0.600">C</text>
        <text x="75" y="35" fontSize="9" strokeWidth="0.500">ell</text>
        <text x="84.500" y="35" fontSize="15" strokeWidth="0.600">A</text>
        <text x="95" y="35" fontSize="8" strokeWidth="0.500">tlas</text>
      </g>
    </svg>
  );
}

function LassoIcon() {
  return (
    <svg viewBox="0 0 40 40" className="size-10" fill="none" stroke="#757575" strokeLinecap="round">
      <path d="M9 26C3 22 1 16 4 11 8 4 17 .5 25 1.500S39 9 38 16 28 29 20 29c-2 0-4 0-5-.5" strokeWidth="3" />
      <ellipse cx="10" cy="25.500" rx="4.500" ry="4.500" strokeWidth="2" />
      <path d="M10 20c3 3 5 6 4 10-.5 3-3 4-4 8M13 30c-2 1-5 1-7-.5" strokeWidth="2" />
    </svg>
  );
}

function PercentIcon() {
  return (
    <svg viewBox="0 0 28 28" className="size-7" fill="none" stroke="#757575">
      <ellipse cx="6.500" cy="7" rx="4.500" ry="5" strokeWidth="2.600" />
      <ellipse cx="21.500" cy="21" rx="4.500" ry="5" strokeWidth="2.600" />
      <path d="M21.500 2.500 7 26" strokeWidth="2.600" />
    </svg>
  );
}

function HashIcon() {
  return (
    <svg viewBox="0 0 30 28" className="h-7 w-[30px]" fill="none" stroke="#757575" strokeWidth="2.800">
      <path d="M12 1 6 27M24 1 18 27M3 9.500h26M1 18.500h26" />
    </svg>
  );
}

function MoonIcon() {
  return (
    <svg viewBox="0 0 24 36" className="h-9 w-6" fill="#6f6f6f">
      <path d="M1 1C15 1 22 8 22 18S15 35 1 35C7 31 10.500 25 10.500 18S7 5 1 1Z" />
    </svg>
  );
}

/* ---------- page sections ---------- */

const TABS = [
  { label: "EMBEDDINGS", tone: "text-[#212121]" },
  { label: "DISTRIBUTIONS", tone: "text-[#757575]" },
  { label: "COMPOSITION", tone: "text-[#ababab]" },
  { label: "RESULTS", tone: "text-[#757575]" },
];

function Header() {
  return (
    <header className="relative z-10 flex h-[102px] shrink-0 items-center bg-[#f4f4f4] text-[24px] font-medium text-[#212121] shadow-[0_3px_6px_rgba(0,0,0,0.35)]">
      <button type="button" aria-label="Menu" className="ml-5">
        <MdMenu className="size-[41px] text-black" />
      </button>
      <Logo />
      <span className="ml-10">94,782 cells</span>
      <button type="button" aria-label="Dataset info" className="ml-[22px]">
        <MdInfoOutline className="size-10 text-[#6f6f6f]" />
      </button>
      <span className="ml-[10px]">Respiratory cell atlas</span>
      <nav className="relative ml-auto flex h-full items-center text-[25px]">
        <Callout className="-top-[7px] -right-[17px] -bottom-[9px] -left-[38px]" />
        {TABS.map((tab, i) => (
          <button
            key={tab.label}
            type="button"
            disabled={tab.label === "COMPOSITION"}
            className={`relative flex h-full items-center px-[27px] ${tab.tone}`}
          >
            {tab.label}
            {i === 0 && <span className="absolute inset-x-0 bottom-[10px] h-[3px] bg-[#8e24aa]" />}
          </button>
        ))}
      </nav>
      <button type="button" aria-label="More" className="ml-[20px]">
        <MdMoreVert className="size-[41px] text-[#6f6f6f]" />
      </button>
      <button type="button" aria-label="Toggle dark mode" className="ml-[51px]">
        <MoonIcon />
      </button>
      <button type="button" aria-label="Help" className="mr-[62px] ml-[47px]">
        <MdHelp className="size-10 text-[#6f6f6f]" />
      </button>
    </header>
  );
}

function Sidebar() {
  return (
    <aside className="w-[408px] shrink-0 border-r-2 border-[#e0e0e0] pl-[7px] font-medium text-[#b45f06]">
      <section className="relative -ml-[7px] pt-[10px] pr-[7px] pl-[7px]">
        <Callout className="top-1 -right-[18px] -bottom-2 -left-4" />
        <h2 className="text-[27px] leading-8 font-normal tracking-widest">EXPLORE</h2>
        <Combo label="Embeddings" className="mt-[19px]" />
        <Chip label="X_umap" />
        <Combo label="Genes/Features" className="mt-[14px]" />
        <p className="mt-[11px] ml-6 text-[20px] leading-6 font-normal tracking-wide text-[#666666]">Enter or paste list</p>
        <Combo label="Cell Metadata" className="mt-[27px]" />
        <Chip label="donor_age" icon={<MdFontDownload className="mr-[14px] -ml-[7px] size-[27px] text-[#dfc7b1]" />} />
        <Combo label="Sets" className="mt-[14px]" />
      </section>

      <section className="mt-[25px] mr-[7px] border-y border-[#dedede] pt-[3px]">
        <h2 className="text-[27px] leading-8">FILTERS</h2>
        <div className="flex h-[46px] items-start">
          <span className="mt-[6px] text-[20px] leading-6">Combine</span>
          <label className="mt-[10px] ml-[29px] flex items-center text-[26px] leading-8">
            AND
            <input type="checkbox" aria-label="Combine filters with OR" className="sr-only" />
            <span className="mr-3 ml-2 flex w-[51px] items-center">
              <span className="relative z-[1] size-[27px] shrink-0 rounded-full bg-white shadow-[0_2px_2px_rgba(0,0,0,0.18)]" />
              <span className="-ml-2 h-[17px] flex-1 rounded-r-full bg-[#9c9c9c]" />
            </span>
            OR
          </label>
        </div>
      </section>

      <section className="pt-1">
        <h2 className="text-[27px] leading-8">VIEW</h2>
        <Slider label="Opacity" value={100} className="mt-[15px]" />
        <Slider label="Filtered Marker Opacity" value={10} className="mt-4" />
        <OutlinedSelect label="Marker Size" value="100%" className="mt-[18px] w-[366px]" />
        <OutlinedSelect label="Filtered Marker Size" value="100%" className="mt-[15px] w-[366px]" />
        <OutlinedSelect label="Gallery Chart Size" value="Small" className="mt-[14px] w-[366px]" />
        <LabelledSwitch label="Gallery Labels" className="mt-6" />
        <h3 className="mt-[13px] text-[20px] leading-6">Color Scheme</h3>
        <button
          type="button"
          aria-label="Color Scheme"
          className="mt-7 flex h-[42px] w-[354px] items-start border-b-2 border-dotted border-[#a0a0a0]"
        >
          <span className="h-6 w-[300px] bg-[linear-gradient(90deg,#3d0751,#443b84,#3d6688,#40868c,#4aa884,#64be6c,#99d347,#f3e626)]" />
          <MdArrowDropDown className="mt-[-5px] ml-[1px] size-[38px] text-[#bdbdbd]" />
        </button>
        <h3 className="text-[20px] leading-6 font-normal text-[#a3a3a3]">Custom Color Range</h3>
        <div className="mt-4 flex gap-[7px]">
          <OutlinedInput label="Min" muted className="w-[153px]" />
          <OutlinedInput label="Max" muted className="w-[153px]" />
        </div>
        <LabelledSwitch label="Reverse Colors" disabled className="mt-[11px]" />
        <OutlinedInput label="Label Font Size" value="14" className="mt-[14px] w-[220px]" />
        <OutlinedInput label="Label Shadow Size" value="4" className="mt-[15px] w-[220px]" />
      </section>
    </aside>
  );
}

const CATEGORIES: [string, string, string][] = [
  ["0–30d", "2,858", "a"],
  ["1–24m", "2,989", "b"],
  ["2–5y", "2,827", "c"],
  ["5pcw", "24", "d"],
  ["6–11y", "1,823", "e"],
  ["6pcw6d", "53", "f"],
  ["9pcw", "11", "g"],
  ["9pcw-11pcw", "10", "h"],
  ["11pcw", "19", "i"],
  ["11.5w", "165", "j"],
  ["12–17y", "8,796", "k"],
  ["15pcw", "119", "l"],
  ["15w", "968", "m"],
  ["18–64y", "2,647", "n"],
  ["18pcw", "113", "o"],
  ["18w", "6,338", "p"],
  ["19-29y", "83", "q"],
  ["20pcw", "80", "r"],
  ["22pcw", "110", "s"],
  ["22y", "309", "t"],
];

function Legend() {
  return (
    <div className="absolute top-[77px] right-[14px] w-[425px]">
      <div className="relative">
        <Combo label="Search" />
        <Callout className="-top-[22px] -right-[26px] -bottom-[15px] -left-[30px]" />
      </div>
      <div className="mt-[5px] flex h-[1344px] overflow-hidden">
        <ul className="flex-1">
          {CATEGORIES.map(([name, count, key]) => (
            <li key={name} className="flex h-[68px] items-start border-b-2 border-[#e0e0e0]">
              <span className="mt-[11px] mr-1 size-5 shrink-0" style={{ backgroundColor: PALETTE[key] }} />
              <div className="flex-1 text-[24px] leading-[35px]">
                <div className="font-medium text-[#b45f06]">{name}</div>
                <div className="text-[#666666]">{count}</div>
              </div>
              <button type="button" aria-label={`Options for ${name}`} className="mt-4 mr-[11px]">
                <MdArrowDropDown className="size-[38px] text-[#6f6f6f]" />
              </button>
            </li>
          ))}
        </ul>
        <ScrollBar className="mt-[2px] w-[50px] shrink-0 pt-[10px]" thumb="h-[582px] w-7" />
      </div>
    </div>
  );
}

function Toolbar() {
  return (
    <div className="flex h-[58px] shrink-0 items-center pt-[5px] text-[#757575]">
      <button type="button" aria-label="Home" className="ml-[6px]"><MdHome className="size-[38px]" /></button>
      <button type="button" aria-label="Lasso" className="ml-[12px]"><LassoIcon /></button>
      <button type="button" aria-label="Box select" className="ml-[12px]"><MdPhotoSizeSelectSmall className="size-10" /></button>
      <button type="button" aria-label="Pan" className="ml-[12px] text-[#d3264f]"><FaArrowsAlt className="size-[39px]" /></button>
      <button type="button" aria-label="Save image" className="ml-[13px]"><MdPhotoCamera className="size-10" /></button>
      <button type="button" aria-label="Copy to gallery" className="ml-[11px]"><MdPhotoLibrary className="size-10" /></button>

      <button type="button" aria-label="Sort by name" className="ml-auto text-[#d3264f]"><MdSortByAlpha className="size-[34px]" /></button>
      <button type="button" aria-label="Sort by percent" className="ml-[5px]"><PercentIcon /></button>
      <button type="button" aria-label="Sort by count" className="ml-[12px]"><HashIcon /></button>
      <button type="button" aria-label="Select all" disabled className="ml-[6px] text-[#bdbdbd]"><MdCheckBox className="size-[41px]" /></button>
      <button type="button" aria-label="Save" className="ml-[10px]"><MdSave className="size-[41px]" /></button>
      <button type="button" className="mr-10 ml-[24px] flex items-center text-[27px] font-medium text-[#b45f06]">
        donor_age
        <MdExpandLess className="ml-[2px] size-[38px]" />
      </button>
    </div>
  );
}

function Workspace() {
  return (
    <main className="relative flex min-h-0 min-w-0 flex-1 flex-col overflow-x-clip pl-[13px]">
      <Toolbar />
      <svg viewBox="437 170 1801 1375" className="block w-full shrink-0" role="img" aria-label="X_umap embedding coloured by donor_age">
        <Cells size={8} />
      </svg>
      <div className="min-h-0 flex-1 border-t-2 border-[#dedede] pt-3 pl-1">
        <div className="h-full w-[513px] overflow-hidden border-2 border-b-0 border-[#b45f06] text-[#b45f06]">
          <button type="button" className="block w-full pt-1 pr-2 text-right text-[21px] leading-7">donor_age</button>
          <svg viewBox="443 1593 509 455" className="block w-full" role="img" aria-label="donor_age thumbnail">
            <g transform="translate(210.400 1515) scale(0.363)">
              <Cells size={18} />
            </g>
          </svg>
        </div>
      </div>
    </main>
  );
}

export default function App() {
  return (
    <div className="flex h-screen overflow-hidden bg-white pt-[10px] pr-10 pb-[9px] pl-4 font-[Roboto,sans-serif]">
      <div className="flex min-w-0 flex-1 flex-col">
        <Header />
        <div className="flex min-h-0 flex-1">
          <Sidebar />
          <div className="relative z-10 flex min-w-0 flex-1">
            <Workspace />
            <Legend />
          </div>
        </div>
      </div>
      <ScrollBar className="w-[50px] shrink-0 pt-[10px]" thumb="h-[1712px] w-7" />
    </div>
  );
}
